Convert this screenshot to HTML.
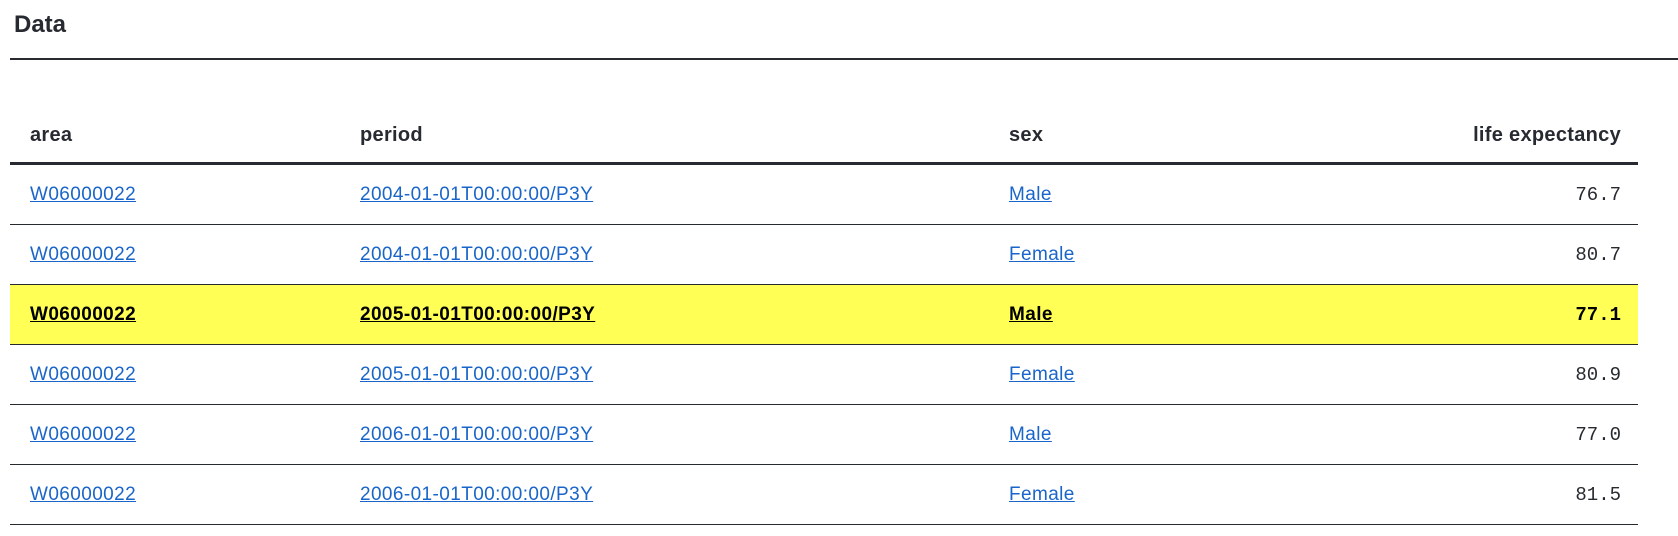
<!DOCTYPE html>
<html><head><meta charset="utf-8"><style>
body{margin:0;background:#fff;font-family:"Liberation Sans",Arial,sans-serif;color:#272a30;width:1678px;height:536px;overflow:hidden;position:relative}
h2{position:absolute;left:14px;top:9px;margin:0;font-size:24px;font-weight:bold;line-height:32px}
.rule{position:absolute;left:10px;right:0;top:58px;height:2px;background:#272a30}
.tbl{position:absolute;left:10px;top:105px;width:1628px}
.row{position:relative;height:59px;border-bottom:1px solid #272a30}
.head{height:57px;border-bottom:3px solid #272a30;font-weight:bold}
.c{position:absolute;top:0;line-height:60px;font-size:19px;letter-spacing:.4px}
.head .c{line-height:60px;font-size:20px;letter-spacing:.3px}
.a{left:20px}.p{left:350px}.s{left:999px}
.v{right:17px;font-family:"Liberation Mono",monospace;font-size:19px;letter-spacing:0}
.head .v{font-family:"Liberation Sans",Arial,sans-serif;font-size:20px}
a{color:#1a65c9;text-decoration:underline}
.hl{background:#ffff55}
.hl a,.hl .v{color:#000;font-weight:bold}
</style></head><body>
<h2>Data</h2>
<div class="rule"></div>
<div class="tbl">
<div class="row head"><span class="c a">area</span><span class="c p">period</span><span class="c s">sex</span><span class="c v">life expectancy</span></div>
<div class="row"><span class="c a"><a>W06000022</a></span><span class="c p"><a>2004-01-01T00:00:00/P3Y</a></span><span class="c s"><a>Male</a></span><span class="c v">76.7</span></div>
<div class="row"><span class="c a"><a>W06000022</a></span><span class="c p"><a>2004-01-01T00:00:00/P3Y</a></span><span class="c s"><a>Female</a></span><span class="c v">80.7</span></div>
<div class="row hl"><span class="c a"><a>W06000022</a></span><span class="c p"><a>2005-01-01T00:00:00/P3Y</a></span><span class="c s"><a>Male</a></span><span class="c v">77.1</span></div>
<div class="row"><span class="c a"><a>W06000022</a></span><span class="c p"><a>2005-01-01T00:00:00/P3Y</a></span><span class="c s"><a>Female</a></span><span class="c v">80.9</span></div>
<div class="row"><span class="c a"><a>W06000022</a></span><span class="c p"><a>2006-01-01T00:00:00/P3Y</a></span><span class="c s"><a>Male</a></span><span class="c v">77.0</span></div>
<div class="row"><span class="c a"><a>W06000022</a></span><span class="c p"><a>2006-01-01T00:00:00/P3Y</a></span><span class="c s"><a>Female</a></span><span class="c v">81.5</span></div>
</div>
</body></html>
